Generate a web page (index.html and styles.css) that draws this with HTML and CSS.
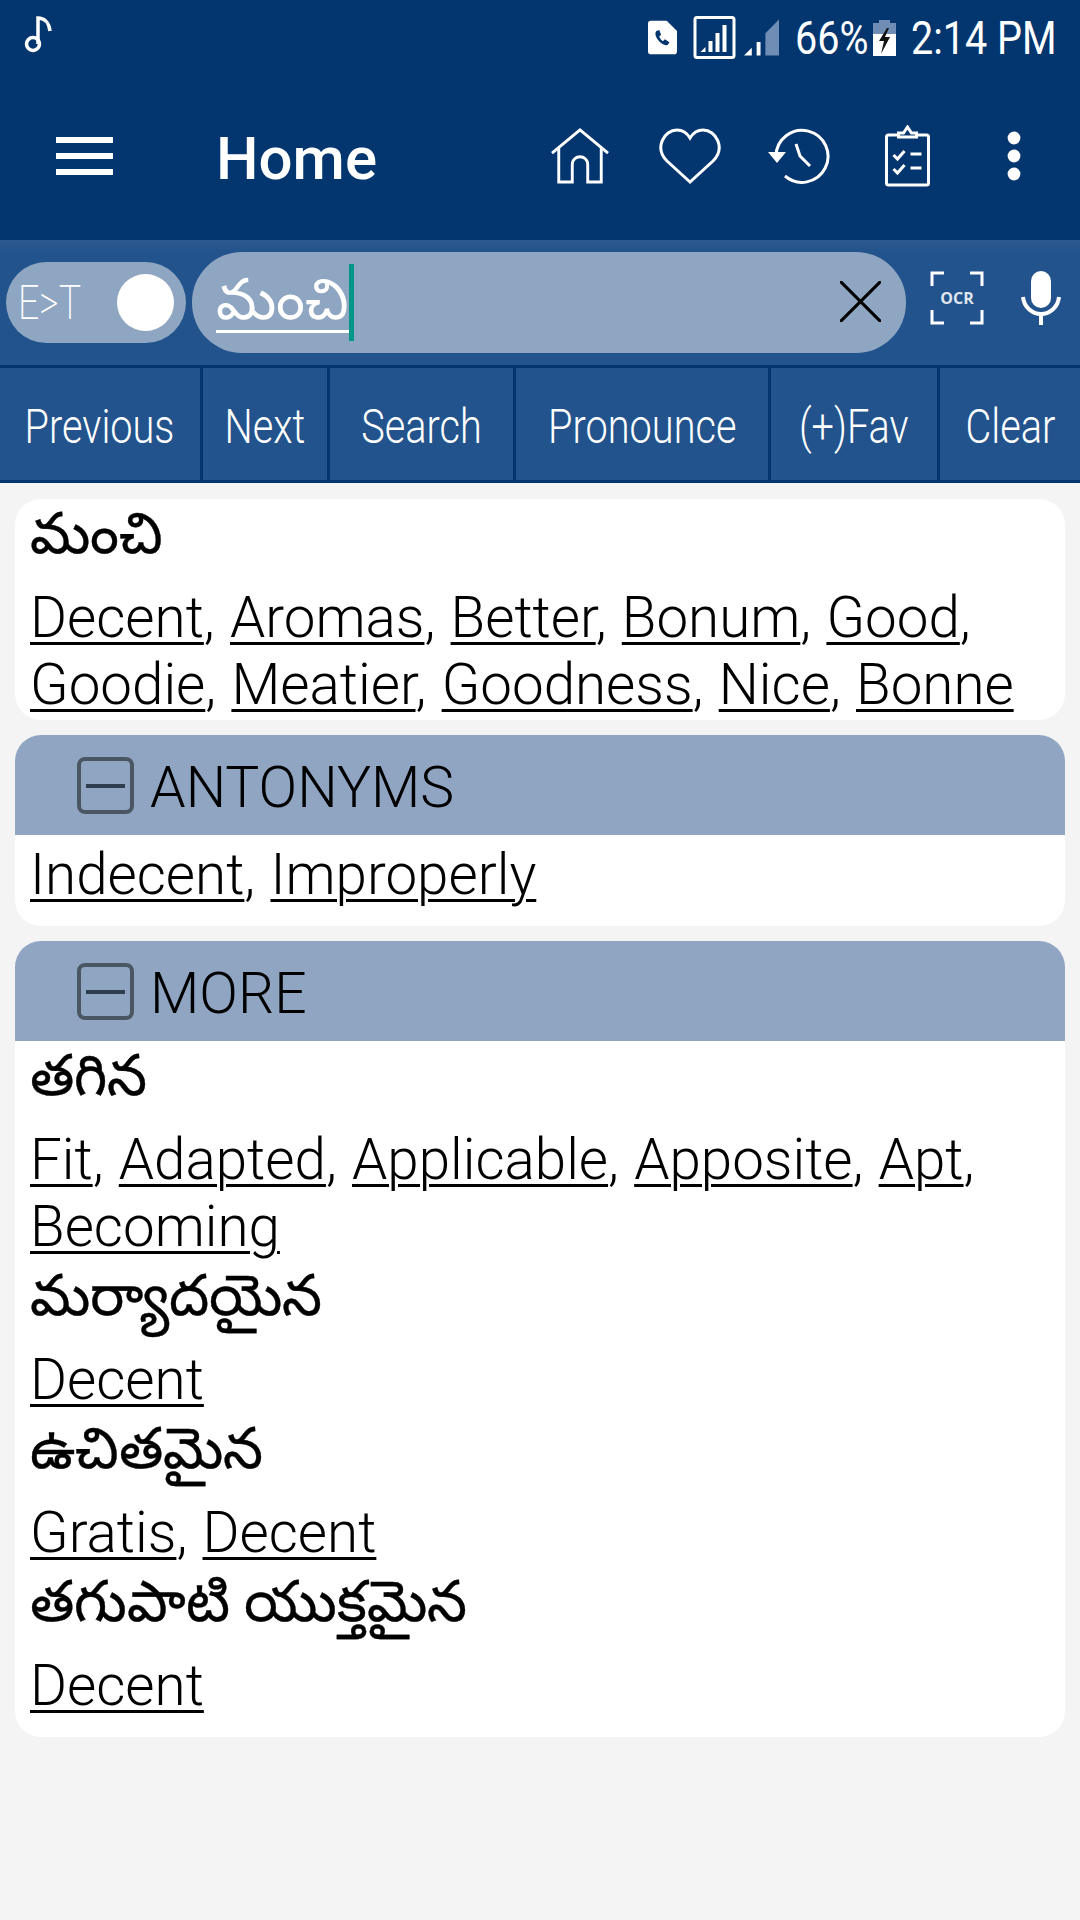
FILE: index.html
```html
<!DOCTYPE html>
<html lang="te">
<head>
  <meta charset="UTF-8">
  <title>Home</title>
  <link rel="stylesheet" href="styles.css">
</head>
<body>
  <header class="app-head">
    <div class="status-bar">
      <svg class="note" width="28" height="38" viewBox="0 0 28 38"><circle cx="9" cy="28" r="6.5" fill="none" stroke="#fff" stroke-width="3.5"/><path d="M14 28V2c6 0 11 4 12 13" fill="none" stroke="#fff" stroke-width="3.5"/></svg>
      <div class="status-right">
        <svg class="st-sim" width="29" height="35" viewBox="0 0 31 36"><path d="M3 0h17l11 11v22a3 3 0 0 1-3 3H3a3 3 0 0 1-3-3V3a3 3 0 0 1 3-3z" fill="#fff"/><path d="M9 11c-2 2-1 6 2 10s7 6 10 5l2-3-5-3-2 2c-2-1-3-3-4-5l2-2-2-5z" fill="#03366f"/></svg>
        <svg class="st-sig" width="43" height="43" viewBox="0 0 42 43"><rect x="1.5" y="1.5" width="39" height="40" rx="2" fill="none" stroke="#fff" stroke-width="3"/><path d="M7 36l5-5v5zM15 36v-11h4v11zM22 36V17h4v19zM29 36V9h4v27z" fill="#fff"/></svg>
        <svg class="st-sig2" width="35" height="37" viewBox="0 0 36 37"><path d="M0 37l8-8v8zM13 37V23h4v14z" fill="#fff"/><path d="M22 37V14L36 0v37z" fill="#6f8db5"/></svg>
        <span class="st-text st-pct"><span>66%</span></span>
        <svg class="st-batt" width="23" height="36" viewBox="0 0 23 36"><path d="M6 0h11v3h6v11H0V3h6z" fill="#6f8db5"/><path d="M0 14h23v22H0z" fill="#fff"/><path d="M14 8L6 21h5l-3 13 9-17h-5l4-9z" fill="#111"/></svg>
        <span class="st-text st-time"><span>2:14 PM</span></span>
      </div>
    </div>
    <div class="toolbar">
      <div class="burger"><i></i><i></i><i></i></div>
      <h1 class="title">Home</h1>
      <div class="tool-icons">
        <svg width="62" height="56" viewBox="1 0 60 58" fill="none" stroke="#fff" stroke-width="3"><path d="M2 26L31 2l29 24"/><path d="M9 21v35h14V38c0-11 16-11 16 0v18h14V21"/></svg>
        <svg class="ti-heart" width="62" height="56" viewBox="0 0 62 56" fill="none" stroke="#fff" stroke-width="3"><path d="M31 54L8 33C-5 20 5 2 18 2c6 0 10 3 13 8 3-5 7-8 13-8 13 0 23 18 10 31z"/></svg>
        <svg width="62" height="56" viewBox="0 0 62 56" fill="none" stroke="#fff" stroke-width="3"><path d="M8 28a26 26 0 1 1 9 20"/><path d="M0 24h18l-9 11z" fill="#fff" stroke="none"/><path d="M28 16l4 12 10 10"/></svg>
        <svg class="ti-clip" width="47" height="62" viewBox="0 0 46 62" fill="none" stroke="#fff" stroke-width="3"><path d="M14 10H4a2 2 0 0 0-2 2v46a2 2 0 0 0 2 2h38a2 2 0 0 0 2-2V12a2 2 0 0 0-2-2H32"/><path d="M14 12V8h5l4-6 4 6h5v4z"/><path d="M9 30l4 4 7-8M9 44l4 4 7-8M26 29h11M26 43h11"/></svg>
        <svg class="ti-dots" width="14" height="50" viewBox="0 0 14 50" fill="#fff"><circle cx="7" cy="7" r="6.4"/><circle cx="7" cy="25" r="6.4"/><circle cx="7" cy="43" r="6.4"/></svg>
      </div>
    </div>
  </header>

  <div class="search-row">
    <div class="lang-toggle">
      <span class="lang-label">E&gt;T</span>
      <span class="knob"></span>
    </div>
    <div class="search-box">
      <span class="search-text">మంచి</span><span class="cursor"></span>
      <svg class="clear-x" width="41" height="41" viewBox="0 0 40 40" stroke="#000" stroke-width="3" stroke-linecap="round"><path d="M1 1l38 38M39 1L1 39"/></svg>
    </div>
    <div class="ocr">
      <svg class="ocr-frame" width="54" height="54" viewBox="0 0 54 54" fill="none" stroke="#fff" stroke-width="3"><path d="M14 2H2v13M40 2h12v13M2 39v13h12M52 39v13H40"/></svg>
      <span class="ocr-label">OCR</span>
    </div>
    <svg class="mic" width="40" height="54" viewBox="0 0 40 54"><rect x="10" y="0" width="20" height="37" rx="10" fill="#fff"/><path d="M2 26c1 10 9 17 18 17s17-7 18-17" fill="none" stroke="#fff" stroke-width="4"/><path d="M18 42h4v12h-4z" fill="#fff"/></svg>
  </div>

  <nav class="actions">
    <button><span>Previous</span></button>
    <button><span>Next</span></button>
    <button><span>Search</span></button>
    <button><span>Pronounce</span></button>
    <button><span>(+)Fav</span></button>
    <button><span>Clear</span></button>
  </nav>

  <main class="results">
    <section class="card main-card">
      <div class="body">
        <h3 class="te">మంచి</h3>
        <p class="words"><a>Decent</a>, <a>Aromas</a>, <a>Better</a>, <a>Bonum</a>, <a>Good</a>, <a>Goodie</a>, <a>Meatier</a>, <a>Goodness</a>, <a>Nice</a>, <a>Bonne</a></p>
      </div>
    </section>

    <section class="card">
      <div class="card-head"><span class="minus"></span>ANTONYMS</div>
      <div class="body anto-body">
        <p class="words"><a>Indecent</a>, <a>Improperly</a></p>
      </div>
    </section>

    <section class="card">
      <div class="card-head"><span class="minus"></span>MORE</div>
      <div class="body">
        <h3 class="te">తగిన</h3>
        <p class="words"><a>Fit</a>, <a>Adapted</a>, <a>Applicable</a>, <a>Apposite</a>, <a>Apt</a>, <a>Becoming</a></p>
        <h3 class="te">మర్యాదయైన</h3>
        <p class="words"><a>Decent</a></p>
        <h3 class="te">ఉచితమైన</h3>
        <p class="words"><a>Gratis</a>, <a>Decent</a></p>
        <h3 class="te">తగుపాటి యుక్తమైన</h3>
        <p class="words"><a>Decent</a></p>
      </div>
    </section>
  </main>
</body>
</html>
```
FILE: styles.css
```css
* {
    margin: 0;
    padding: 0;
    box-sizing: border-box;
}
body {
    background-color: #f4f4f4;
    font-family: Roboto, "Noto Sans", sans-serif;
    color: #000;
    width: 1080px;
    height: 1920px;
    overflow: hidden;
}
.app-head {
    background-color: #03366f;
    height: 240px;
    color: #fff;
}
.status-bar {
    height: 72px;
    display: flex;
    justify-content: space-between;
    align-items: flex-start;
    padding: 16px 25px 0 24px;
}
.status-right {
    display: flex;
    align-items: center;
}
.st-sim { margin-right: 16px; }
.st-sig { margin-right: 8px; }
.st-sig2 { margin-right: 16px; }
.st-batt { margin-right: 15px; }
.st-text {
    font-size: 46px;
    font-weight: 400;
    line-height: 42px;
    display: block;
    white-space: nowrap;
}
.st-text span {
    display: block;
    transform: scaleX(0.86);
    transform-origin: left center;
}
.st-pct { width: 78px; }
.st-time { width: 144px; }
.toolbar {
    height: 168px;
    display: flex;
    align-items: center;
}
.burger {
    margin-left: 56px;
    width: 57px;
    display: flex;
    flex-direction: column;
    gap: 10px;
}
.burger i {
    display: block;
    height: 6px;
    background: #fff;
}
.title {
    font-size: 60px;
    font-weight: 500;
    margin-left: 103px;
    margin-top: 4px;
}
.tool-icons {
    margin-left: auto;
    display: flex;
    align-items: center;
    gap: 47px;
    padding-right: 59px;
}
.ti-heart { margin-left: 1px; }
.ti-clip { margin-left: 7px; }
.ti-dots { margin-left: 29px; }
.search-row {
    height: 125px;
    background: linear-gradient(#2d5a90 0, #23538c 12px);
    display: flex;
    align-items: center;
    padding-left: 6px;
}
.lang-toggle {
    width: 180px;
    height: 81px;
    border-radius: 41px;
    background-color: #8fa6c2;
    display: flex;
    align-items: center;
    justify-content: space-between;
    padding: 0 12px 0 12px;
}
.lang-label {
    font-size: 48px;
    font-weight: 200;
    color: #fff;
    transform: scaleX(0.78);
    transform-origin: left center;
}
.knob {
    width: 57px;
    height: 57px;
    border-radius: 50%;
    background: #fff;
}
.search-box {
    width: 714px;
    height: 101px;
    margin-left: 6px;
    border-radius: 50px;
    background-color: #8fa6c2;
    display: flex;
    align-items: center;
    padding-left: 24px;
}
.search-text {
    font-size: 57px;
    color: #fff;
    margin-top: 8px;
    text-decoration: underline;
    text-decoration-thickness: 3px;
    text-underline-offset: 11px;
}
.cursor {
    width: 5px;
    height: 77px;
    background-color: #009688;
}
.clear-x { margin-left: auto; margin-right: 25px; margin-bottom: 2px; }
.ocr {
    position: relative;
    width: 54px;
    height: 54px;
    margin-left: 24px;
    margin-bottom: 10px;
}
.ocr-frame { display: block; }
.ocr-label {
    position: absolute;
    left: 0;
    right: 0;
    top: 17px;
    text-align: center;
    font-family: "Open Sans", sans-serif;
    font-size: 16px;
    line-height: 20px;
    font-weight: 700;
    color: #dfe6f0;
}
.mic { margin-left: 37px; margin-bottom: 10px; }
.actions {
    display: grid;
    grid-template-columns: 200px 124px 183px 252px 166px 1fr;
    gap: 3px;
    height: 118px;
    background-color: #03366f;
    padding: 3px 0;
}
.actions button {
    background-color: #23538c;
    border: none;
    color: #fff;
    font-family: Roboto, sans-serif;
    font-size: 49px;
    font-weight: 300;
    padding-top: 4px;
    display: flex;
    align-items: center;
    justify-content: center;
}
.actions span {
    display: block;
    transform: scaleX(0.81);
    white-space: nowrap;
}
.results {
    padding: 16px 15px 0;
    display: flex;
    flex-direction: column;
    gap: 15px;
}
.card {
    background: #fff;
    border-radius: 26px;
    overflow: hidden;
}
.card-head {
    height: 100px;
    background-color: #8fa5c2;
    display: flex;
    align-items: center;
    padding: 4px 0 0 62px;
    font-size: 57px;
    font-weight: 300;
}
.minus {
    width: 57px;
    height: 57px;
    margin-right: 16px;
    margin-bottom: 4px;
    border: 4px solid #4a5763;
    border-radius: 8px;
    position: relative;
}
.minus::after {
    content: "";
    position: absolute;
    left: 5px;
    right: 5px;
    top: 23px;
    height: 4px;
    background: #2f3e4e;
}
.body {
    padding: 0 15px 17px;
}
.main-card .body { padding-bottom: 1px; }
.anto-body { padding-top: 7px; }
.te {
    font-size: 57px;
    font-weight: 400;
    line-height: 70px;
    padding-bottom: 16px;
    -webkit-text-stroke: 0.4px #000;
}
.words {
    font-size: 56.5px;
    font-weight: 300;
    line-height: 67px;
    word-spacing: 1.5px;
}
.words a {
    text-decoration: underline;
    text-decoration-thickness: 3px;
    text-underline-offset: 5px;
}
```
